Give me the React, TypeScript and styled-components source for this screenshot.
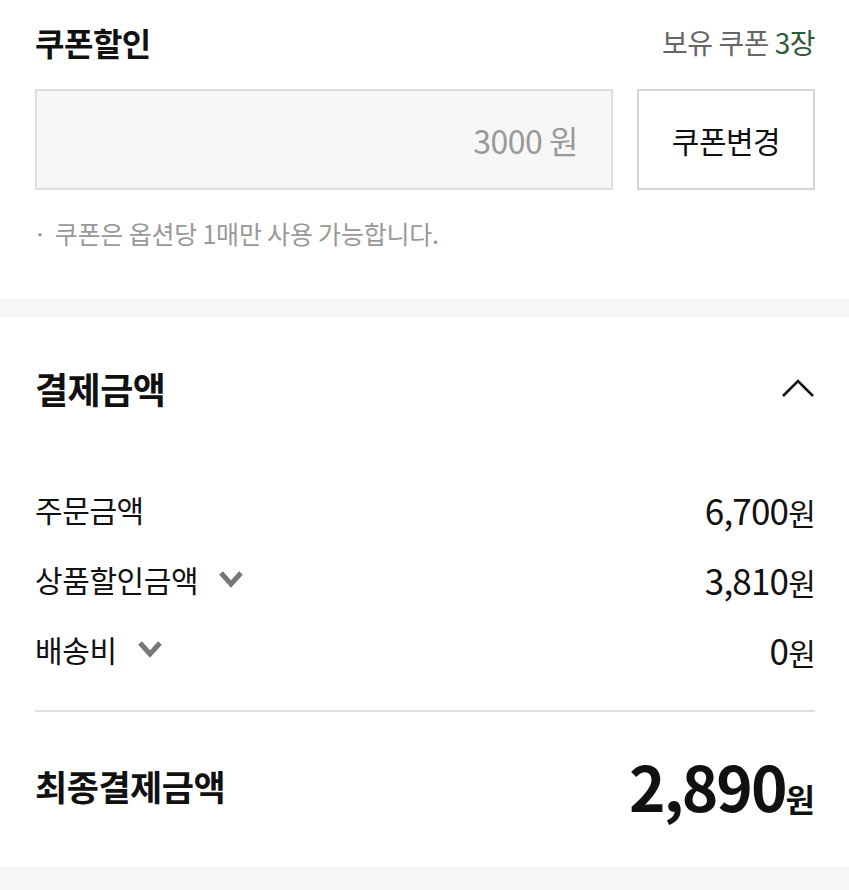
import styled, { createGlobalStyle } from 'styled-components';

const GlobalStyle = createGlobalStyle`
  body {
    margin: 0;
    background: #fff;
    font-family: 'Noto Sans CJK KR', 'Noto Sans', sans-serif;
    color: #111;
  }
`;

const Page = styled.div`
  width: 849px;
  display: flex;
  flex-direction: column;
`;

const Section = styled.section<{ $bottom: number }>`
  padding: 0 34px ${({ $bottom }) => $bottom}px 35px;
  display: flex;
  flex-direction: column;
`;

const Band = styled.div<{ $h: number }>`
  height: ${({ $h }) => $h}px;
  background: #f6f6f6;
`;

const HeadRow = styled.div<{ $h: number }>`
  height: ${({ $h }) => $h}px;
  display: flex;
  align-items: center;
  justify-content: space-between;
`;

const Title = styled.h2<{ $size: number }>`
  margin: 0;
  font-size: ${({ $size }) => $size}px;
  font-weight: 700;
  letter-spacing: -0.5px;
  color: #111;
`;

const Owned = styled.span`
  font-size: 28px;
  color: #666;
  letter-spacing: -0.5px;
  em {
    font-style: normal;
    color: #2d5a38;
  }
`;

const CouponRow = styled.div`
  margin-top: 5px;
  display: flex;
  gap: 24px;
  height: 101px;
`;

const CouponField = styled.div`
  flex: 1;
  box-sizing: border-box;
  border: 2px solid #dedede;
  background: #f7f7f7;
  display: flex;
  align-items: center;
  justify-content: flex-end;
  padding-right: 33px;
  font-size: 32px;
  color: #999;
  letter-spacing: -0.5px;
`;

const ChangeButton = styled.button`
  width: 178px;
  box-sizing: border-box;
  border: 2px solid #d6d6d6;
  background: #fff;
  font-family: inherit;
  font-size: 30px;
  color: #111;
  letter-spacing: -0.5px;
  padding: 0;
`;

const Note = styled.p`
  margin: 28px 0 0;
  line-height: 30px;
  font-size: 25px;
  color: #999;
  letter-spacing: -0.2px;
  display: flex;
  gap: 8px;
  &::before {
    content: '·';
    margin-left: -2px;
  }
`;

const Rows = styled.div`
  margin-top: 16px;
  display: flex;
  flex-direction: column;
`;

const Row = styled.div`
  height: 70px;
  display: flex;
  align-items: center;
  justify-content: space-between;
`;

const Label = styled.span`
  display: flex;
  align-items: center;
  gap: 20px;
  font-size: 30px;
  letter-spacing: -0.4px;
  color: #111;
`;

const Amount = styled.span`
  font-size: 35px;
  letter-spacing: -0.8px;
  color: #111;
  small {
    font-size: 30px;
  }
`;

const Divider = styled.hr`
  margin: 26px 0 0;
  border: 0;
  height: 2px;
  background: #e0e0e0;
`;

const TotalRow = styled.div`
  height: 146px;
  display: flex;
  align-items: center;
  justify-content: space-between;
`;

const Total = styled.span`
  font-size: 62px;
  font-weight: 700;
  letter-spacing: -2px;
  line-height: 1;
  small {
    font-size: 32px;
    letter-spacing: 0;
  }
`;

const DownIcon = () => (
  <svg width="26" height="18" viewBox="0 0 26 18">
    <polyline points="3,3 13,14 23,3" fill="none" stroke="#777" strokeWidth="5" />
  </svg>
);

const UpIcon = () => (
  <svg width="34" height="20" viewBox="0 0 34 20">
    <polyline points="2,18 17,3 32,18" fill="none" stroke="#111" strokeWidth="2.6" />
  </svg>
);

const rows = [
  { label: '주문금액', value: '6,700', toggle: false },
  { label: '상품할인금액', value: '3,810', toggle: true },
  { label: '배송비', value: '0', toggle: true },
];

export default function App() {
  return (
    <Page>
      <GlobalStyle />
      <Section $bottom={50}>
        <HeadRow $h={84}>
          <Title $size={32}>쿠폰할인</Title>
          <Owned>
            보유 쿠폰 <em>3장</em>
          </Owned>
        </HeadRow>
        <CouponRow>
          <CouponField>3000 원</CouponField>
          <ChangeButton>쿠폰변경</ChangeButton>
        </CouponRow>
        <Note>쿠폰은 옵션당 1매만 사용 가능합니다.</Note>
      </Section>
      <Band $h={20} />
      <Section $bottom={8}>
        <HeadRow $h={140}>
          <Title $size={36}>결제금액</Title>
          <UpIcon />
        </HeadRow>
        <Rows>
          {rows.map((r) => (
            <Row key={r.label}>
              <Label>
                {r.label}
                {r.toggle && <DownIcon />}
              </Label>
              <Amount>
                {r.value}
                <small>원</small>
              </Amount>
            </Row>
          ))}
        </Rows>
        <Divider />
        <TotalRow>
          <Title $size={35}>최종결제금액</Title>
          <Total>
            2,890<small>원</small>
          </Total>
        </TotalRow>
      </Section>
      <Band $h={24} />
    </Page>
  );
}
